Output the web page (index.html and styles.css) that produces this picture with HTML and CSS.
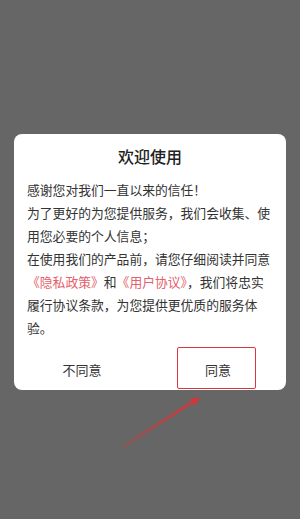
FILE: index.html
```html
<!DOCTYPE html>
<html lang="zh">
<head>
<meta charset="utf-8">
<link rel="stylesheet" href="styles.css">
</head>
<body>
<div class="screen">
  <div class="dialog">
    <div class="title">欢迎使用</div>
    <div class="content">
      <p>感谢您对我们一直以来的信任！</p>
      <p>为了更好的为您提供服务，我们会收集、使用您必要的个人信息；</p>
      <p>在使用我们的产品前，请您仔细阅读并同意<span class="link">《隐私政策》</span>和<span class="link">《用户协议》</span>，我们将忠实履行协议条款，为您提供更优质的服务体验。</p>
    </div>
    <div class="actions">
      <div class="btn">不同意</div>
      <div class="btn">同意</div>
    </div>
  </div>
  <div class="highlight"></div>
  <svg class="arrow" width="300" height="519" viewBox="0 0 300 519">
    <defs>
      <linearGradient id="g" x1="125" y1="445" x2="198" y2="399" gradientUnits="userSpaceOnUse">
        <stop offset="0" stop-color="#c9393c" stop-opacity="0.35"/>
        <stop offset="1" stop-color="#d2363a" stop-opacity="0.95"/>
      </linearGradient>
    </defs>
    <line x1="124" y1="446" x2="194" y2="401" stroke="url(#g)" stroke-width="3" stroke-linecap="round"/>
    <polygon points="200,397 190,399 195,406" fill="#d2363a"/>
  </svg>
</div>
</body>
</html>
```
FILE: styles.css
```css
html, body {
  margin: 0;
  padding: 0;
  background: #666666;
}
.screen {
  position: relative;
  width: 300px;
  height: 519px;
  overflow: hidden;
  font-family: "Noto Sans CJK SC", "Noto Sans", sans-serif;
}
.dialog {
  margin: 134px 0 0 14px;
  width: 272px;
  height: 256px;
  background: #ffffff;
  border-radius: 8px;
  box-sizing: border-box;
  display: flex;
  flex-direction: column;
}
.title {
  padding-top: 11px;
  text-align: center;
  font-size: 16px;
  font-weight: 500;
  line-height: 22px;
  color: #222;
}
.content {
  margin-top: 11px;
  padding: 0 10px 0 13px;
  font-size: 12.8px;
  line-height: 23px;
  color: #333;
}
.content p {
  margin: 0;
}
.link {
  color: #e4606a;
}
.actions {
  margin-top: auto;
  display: flex;
  height: 41px;
}
.btn {
  flex: 1;
  display: flex;
  align-items: center;
  justify-content: center;
  font-size: 13px;
  color: #333;
}
.highlight {
  position: absolute;
  left: 177px;
  top: 347px;
  width: 79px;
  height: 42px;
  box-sizing: border-box;
  border: 1.5px solid #d9363e;
  border-radius: 2px;
}
.arrow {
  position: absolute;
  left: 0;
  top: 0;
}
```
